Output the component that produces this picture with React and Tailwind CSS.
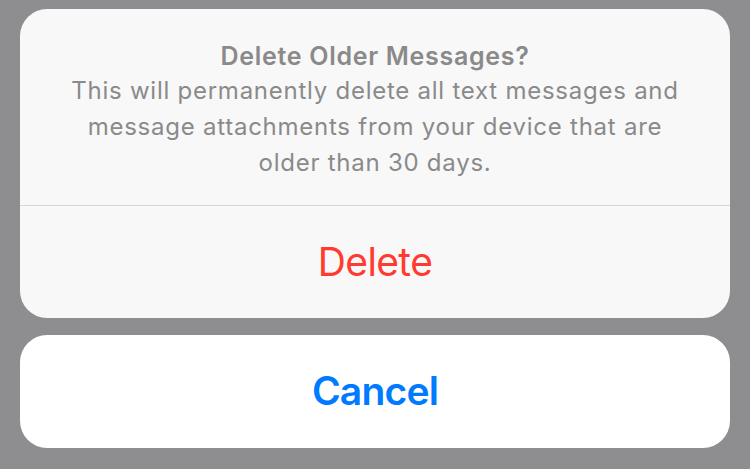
import React from 'react';

const App = () => {
    return (
        <div className="w-[750px] h-[469px] bg-[#8e8e90] px-5 pt-[9px] flex flex-col gap-[17px] font-['Inter','Roboto',sans-serif] overflow-hidden">
            <div className="bg-[#f8f8f8] rounded-[27px] overflow-hidden flex flex-col">
                <div className="h-[196px] flex flex-col items-center pt-[32px] text-center text-[#8a8a8a]">
                    <h2 className="text-[25px] font-semibold leading-[30px] tracking-[0.7px]">Delete Older Messages?</h2>
                    <p className="text-[24px] leading-[36px] mt-[2px] tracking-[0.75px]">
                        This will permanently delete all text messages and
                        <br />
                        message attachments from your device that are
                        <br />
                        older than 30 days.
                    </p>
                </div>
                <div className="h-px bg-[#d6d6d6]" />
                <button className="h-[112px] flex items-center justify-center text-[39px] tracking-[-0.6px] text-[#ff3b30]">
                    Delete
                </button>
            </div>
            <button className="h-[113px] bg-white rounded-[27px] flex items-center justify-center text-[39px] font-semibold tracking-[-0.8px] text-[#007aff]">
                Cancel
            </button>
        </div>
    );
};

export default App;
